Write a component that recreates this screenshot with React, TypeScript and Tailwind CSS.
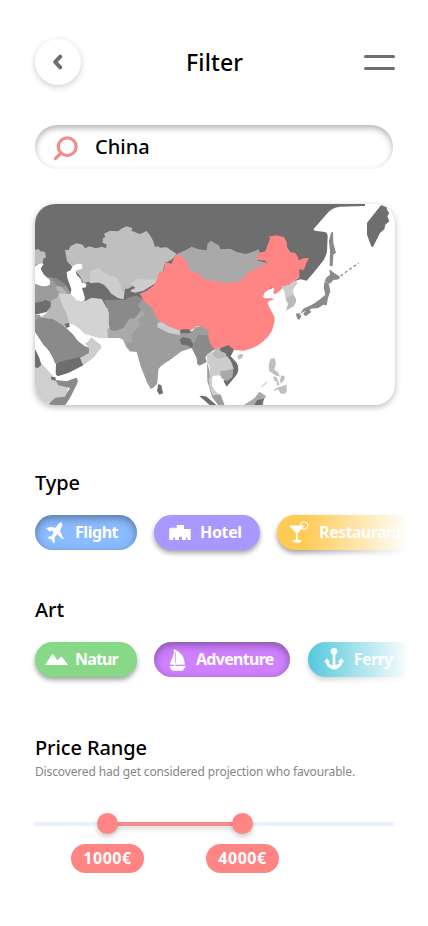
import React from "react";

const heading = "font-['Noto_Sans'] font-medium text-black whitespace-nowrap";

function WorldMap() {
  return (
    <svg viewBox="0 0 1080 603" className="block h-full w-full" fill="#6e6e6e" strokeLinejoin="round">
      <g transform="translate(-15 -18)">
        {/* Russia */}
        <path d="M15 18H1005V24L930 26Q905 28 890 48L851 93Q848 98 860 99L885 102Q893 105 893 115L891 160Q886 185 870 200L850 225L830 248L812 244L700 280L300 320L15 300Z" />
        {/* Ukraine, Black Sea */}
        <path fill="#bfbfbf" d="M15 155L25 153L32 160L45 162L48 178L40 182L38 194L15 202Z" />
        {/* Turkey, Caucasus */}
        <path fill="#9b9b9b" d="M15 250L60 238L80 242L98 254L108 262L118 278L130 292L100 304L80 310L60 330L50 314L15 322Z" />
        <path fill="#fff" d="M15 205L26 198L36 195L41 198L32 212L42 230L57 243Q63 252 59 260Q50 266 34 264L15 257Z" />
        <path fill="#8a8a8a" d="M62 240L82 243L100 255L110 263L100 268L80 262Z" />
        <path fill="#b5b5b5" d="M78 264L95 268L114 288L104 292L80 276Z" />
        {/* Iraq and Syria */}
        <path fill="#b9b9b9" d="M60 326L62 310L80 300L86 290L110 320L112 350L120 378L100 386L60 366L32 358L50 345Z" />
        <path d="M15 314L40 310L46 306L62 312L62 326L50 342L15 350Z" />
        {/* Arabia */}
        <path fill="#9b9b9b" d="M15 350L30 350L34 364L15 372Z" />
        <path fill="#8a8a8a" d="M15 368L30 358L70 364L102 384L130 410L145 430L165 445L180 450L176 468L155 490L100 506L75 496Q62 458 40 440L15 402Z" />
        <path d="M78 498L95 490L150 478L160 502L115 525L85 534Q77 534 77 522Z" />
        <path fill="#cdcdcd" d="M150 480L178 464L176 448L165 438L184 418L198 430L212 440Q218 448 206 458L192 478L160 502Z" />
        <path d="M104 378L118 374L119 386L108 390Z" />
        {/* Horn of Africa */}
        <path fill="#cfcfcf" d="M15 480L34 496L70 535L85 560L115 568L110 590L65 610L35 622H15Z" />
        <path d="M15 452L28 480L34 500L24 510L15 508Z" />
        <path fill="#8a8a8a" d="M76 546L110 550L138 539Q146 541 142 556L120 600L105 622H50L75 600L105 595L120 570L85 562Z" />
        <path d="M63 536L76 538L78 548L64 545Z" />
        {/* Kazakhstan */}
        <path fill="#bfbfbf" d="M105 155L115 157L122 144L140 136L158 140L165 151L178 145L198 151L216 146L228 151L230 140L218 134L219 120L226 117L222 107L240 98L265 100L274 92L290 85L307 90L304 98L330 108L350 99L362 115L370 130L375 148L383 144L390 149L410 148L440 168L425 185L405 195L400 215L385 245L350 255L318 258L290 275L270 300L240 285L218 255L180 252L160 255L150 235L125 205L111 190Z" />
        {/* Central Asia */}
        <path d="M160 256L180 252L215 258L245 282L280 304L290 276L325 280L360 330H220L166 308Z" />
        <path fill="#cdcdcd" d="M180 219L205 211L232 230L258 237L270 258L276 278L283 284L281 304L265 301L242 286L229 264L205 253L180 256Z" />
        <path fill="#cdcdcd" d="M300 256L325 242L350 245L382 244L376 256L340 278L315 284L294 278L316 270Z" />
        <path d="M285 272L300 272L312 268L298 283L284 282Z" />
        {/* Iran */}
        <path fill="#d3d3d3" d="M85 284L105 288L122 288L150 309L165 309L185 299L215 303L225 320L238 346L236 376L248 401L238 420L210 421L188 415L175 410L162 408L148 392L130 380L117 376L112 350L98 325L92 306Z" />
        {/* Pakistan */}
        <path fill="#a9a9a9" d="M232 392L280 380L298 350L318 322L330 308L362 318L350 352L332 362L336 374L312 405L318 435L308 460L290 450L278 424L266 420L234 420Z" />
        {/* Afghanistan */}
        <path fill="#8a8a8a" d="M222 306L250 305L285 306L300 297L320 293L340 302L330 318L334 336L315 360L298 362L280 390L255 399L240 395L236 376L237 346Z" />
        {/* India */}
        <path fill="#9d9d9d" d="M342 300L400 340L450 380L495 405L520 390L540 410L520 425L485 450L455 460L420 486Q386 506 385 516L382 556Q368 575 362 572L352 556L332 505L320 462L298 460L288 436L308 434L304 410L330 380L326 362L346 348L322 322Z" />
        <path d="M385 558L394 562L399 586L388 590L381 578Z" />
        {/* Caspian Sea */}
        <path fill="#fff" d="M110 222L122 217Q126 204 136 200Q150 195 156 200Q160 212 152 214L140 216Q135 222 140 230L152 243L156 254L169 257L168 268L156 270L165 300Q165 310 155 310L140 307L122 288L124 274L112 240Z" />
        {/* Persian Gulf */}
        <path fill="#fff" d="M118 378L130 380L148 392L165 409L178 414L184 418L174 430L158 436Q146 434 140 424L124 398Z" />
        {/* Mongolia */}
        <path fill="#a9a9a9" d="M440 168L468 156L485 146L505 154L530 157L532 138L542 128L566 142L572 154L600 152L620 162L648 168L672 160L686 154L690 168L682 188L712 194L655 230L640 248L590 262L510 255L470 220Z" />
        {/* China */}
        <path fill="#ff8585" d="M442 167L460 180L474 198L475 215L510 228L520 243L590 256L635 248L648 228L680 210L712 196L706 188L680 185L686 165L706 160L720 122L716 116L740 112L762 118L770 132L772 150L782 163L796 165L804 178L806 187L822 181L837 180L829 195L822 216L808 214L808 240L792 250L780 262L764 265L742 285L728 292L732 275L725 268L703 285L700 297L722 298L732 305Q712 316 716 324L728 346Q736 360 733 373L726 398Q715 418 700 430Q675 452 640 458L610 456L595 444L570 452L550 456L535 432L533 400L518 386L500 385L485 396L450 400L415 384L388 370L374 350L366 330L345 312L329 287L350 278L372 262L383 240L385 225L402 217L406 193L425 197L432 178Z" />
        {/* Nepal */}
        <path fill="#cdcdcd" d="M383 374L395 373L415 385L450 398V412L415 404L382 388Z" />
        {/* Yellow Sea */}
        <path fill="#fff" d="M698 296L712 282L728 270L732 271L726 286L740 288L752 282L770 290L750 310L732 313L717 322L712 316L718 308L734 305L730 301L704 301Z" />
        {/* Bhutan, Bangladesh, Myanmar */}
        <path d="M450 398L456 394L476 394L484 405L482 420L496 432L488 452L472 442L455 440L449 425L458 418Z" />
        <path fill="#9d9d9d" d="M452 406L482 405L496 388L515 384L536 398L535 414L510 414L495 446L480 422L455 416Z" />
        <path fill="#8a8a8a" d="M485 450L494 430L506 410L535 412L538 432L554 454L534 468L526 478L530 492L508 503L502 498L500 480Z" />
        {/* Indochina */}
        <path d="M555 454L572 450L595 441L612 455L602 475L620 494Q630 512 620 530L590 566L580 548L606 535L608 512L575 470Z" />
        <path fill="#cdcdcd" d="M530 470L550 460L560 470L590 473L603 490L611 512L570 535L550 533L542 548L540 570L534 540L540 510L531 490Z" />
        <path fill="#b9b9b9" d="M554 454L568 448L572 460L588 466L588 478L560 482L550 470Z" />
        <path fill="#a9a9a9" d="M570 520L595 516L610 512L607 538L590 550L574 540Z" />
        <path fill="#9d9d9d" d="M531 494L537 512L540 550L552 584L572 590L584 622H565L546 597L532 550Z" />
        <path fill="#cdcdcd" d="M536 540L546 544L552 574L566 590L548 592L538 566Z" />
        <path fill="#fff" d="M546 540Q560 526 572 536L580 550L586 574L566 584Q552 578 546 562Z" />
        <path d="M508 594Q520 592 530 596L560 622H540Z" />
        {/* Borneo and the Philippines */}
        <path fill="#a9a9a9" d="M640 622L674 600L688 581L708 594L700 608V622Z" />
        <path d="M672 622L682 606L702 602L695 622Z" />
        <g fill="#bfbfbf">
          <path d="M622 474L632 467L640 470L636 480L625 485Z" />
          <path d="M721 482L734 481L738 495L733 515L744 522L750 536L736 532L718 520L716 504Z" />
          <path d="M729 535L740 538L744 548L734 550ZM754 532L764 535L763 546L752 557L750 546ZM740 548L746 550L748 560L741 563ZM730 576L745 568L770 560L770 580L764 588L750 586L746 574L732 578ZM693 566L714 548L710 556L695 568Z" />
        </g>
      </g>
      <g transform="translate(705 -18)">
        {/* Korea */}
        <path fill="#cdcdcd" d="M35 265L55 262L75 247L83 255L68 276L72 292L46 300L44 282Z" />
        <path fill="#b9b9b9" d="M46 300L70 290Q80 300 78 312L72 324L48 338L54 318Z" />
        {/* Japan */}
        <path fill="#8a8a8a" d="M183 104L189 101L190 135L198 164L190 170L188 205L179 203L180 160L177 128ZM178 214L194 226L210 236L207 244L190 246L180 257L164 248L170 238L180 230ZM164 250L176 256L181 280L174 300L170 322L160 320L145 330L122 332L112 342L104 340L88 348L94 354L88 366L82 362L77 347L92 345L100 332L130 318L152 302L166 290L161 268ZM100 345L118 335L124 342L108 354L102 352Z" />
        {/* Kuril islands */}
        <path fill="none" stroke="#8a8a8a" strokeWidth="4" strokeDasharray="9 7" d="M212 234L240 213L266 195" />
        <path d="M333 22L352 24L350 34L358 46L352 54L358 70L346 80L343 94L330 105L310 145Q305 150 302 140L291 110L291 74Z" />
      </g>
    </svg>
  );
}

function PlaneIcon() {
  return (
    <svg viewBox="0 0 54 66" className="h-[22px] w-[18px] shrink-0" fill="#fff">
      <path d="M47 2Q50 3 49 10L42 27L53 50L49 52L34 37L25 47L27 60L23 64L17 53L5 48L6 45L17 42L23 30L13 25L13 29L8 28L6 22L1 22L1 18L14 15L29 17L38 5Q43 1 47 2Z" />
    </svg>
  );
}
function HotelIcon() {
  return (
    <svg viewBox="0 0 66 46" className="h-[15px] w-[22px] shrink-0" fill="#fff">
      <path d="M0 10H5V8H9V10H14V8H18V10H23V0H45V12H66V46H56V38H51V46H39V36H30V46H18V38H12V46H0Z" />
    </svg>
  );
}
function CocktailIcon() {
  return (
    <svg viewBox="0 0 62 68" className="mb-[2px] h-[22px] w-[20px] shrink-0" fill="#fff">
      <path d="M0 14H48L27 38V57Q39 58 39 63Q38 67 25 67Q11 67 10 63Q11 58 22 57V38Z" />
      <circle cx="47" cy="14" r="11" fill="none" stroke="#fff" strokeWidth="3.5" />
    </svg>
  );
}
function MountainIcon() {
  return (
    <svg viewBox="0 0 68 32" className="h-[11px] w-[23px] shrink-0" fill="#fff">
      <path d="M0 32L20 2Q23 -1 26 3L37 19L45 9Q48 6 51 9L68 32Z" />
    </svg>
  );
}
function BoatIcon() {
  return (
    <svg viewBox="0 0 50 66" className="h-[22px] w-[17px] shrink-0" fill="#fff">
      <path d="M14 0L18 2Q46 14 47 47H18V51H50L44 61Q42 65 38 65H12Q7 65 5 60L0 51H14V47H4L2 44L14 14ZM18 8V42H20V8Z" fillRule="evenodd" />
    </svg>
  );
}
function AnchorIcon() {
  return (
    <svg viewBox="0 0 60 66" className="mb-[2px] h-[22px] w-[20px] shrink-0" fill="#fff">
      <circle cx="30" cy="10" r="10" />
      <path d="M26 15H34V52Q45 50 47 43L41 43L52 31L60 43H55Q51 62 30 65Q9 62 5 43H0L8 31L19 43L13 43Q15 50 26 52Z" />
    </svg>
  );
}

const raised = "shadow-[0_3px_5px_rgba(0,0,0,0.36)]";
const pressed = "shadow-[inset_0_3px_8px_rgba(0,0,0,0.36)]";
const chip =
  "flex h-[35px] shrink-0 items-center rounded-full font-['Noto_Sans'] text-[16px] leading-none font-bold text-white whitespace-nowrap";

function Price({ value }: { value: string }) {
  return (
    <div className="flex w-[73px] flex-col items-center">
      <div className="h-[21px] w-[21px] rounded-full bg-[#ff8585] shadow-[0_3px_5px_rgba(0,0,0,0.2)]" />
      <div className="mt-[10px] flex h-[29px] w-[73px] items-center justify-center rounded-full bg-[#ff8585] pb-[2px] font-['Noto_Sans'] text-[16px] leading-none font-bold tracking-[0.5px] text-white">
        {value}
      </div>
    </div>
  );
}

export default function App() {
  return (
    <main className="h-[926px] w-[428px] overflow-hidden bg-white pt-[39px] pl-[35px]">
      <header className="flex h-[46px] w-[360px] items-center">
        <button className="flex h-[46px] w-[46px] items-center justify-center rounded-full bg-white shadow-[0_2px_6px_rgba(0,0,0,0.2)]">
          <svg viewBox="0 0 12 16" className="h-4 w-3" fill="none" stroke="#6e6e6e" strokeWidth="4" strokeLinecap="round" strokeLinejoin="round">
            <path d="M8.2 2.7L3.2 8L8.2 13.3" />
          </svg>
        </button>
        <h1 className={`${heading} ml-[105px] pt-px text-[23px] leading-none tracking-[0.15px]`}>Filter</h1>
        <button className="mr-[0.4px] ml-auto flex w-[30.4px] flex-col gap-[9px]">
          <span className="h-[3px] w-full rounded-full bg-[#6e6e6e]" />
          <span className="h-[3px] w-full rounded-full bg-[#6e6e6e]" />
        </button>
      </header>

      <div className="mt-[40px] flex h-[44px] w-[358px] items-center rounded-full pl-[18px] shadow-[inset_0_3px_6px_rgba(0,0,0,0.3)]">
        <svg viewBox="0 0 25 25" className="mt-[2px] h-[25px] w-[25px]" fill="none" stroke="#f58b8b" strokeWidth="3.2" strokeLinecap="round">
          <circle cx="14.2" cy="10.7" r="8.9" />
          <path d="M8 17L2.4 22.6" />
        </svg>
        <span className={`${heading} ml-[17px] text-[20px] leading-none`}>China</span>
      </div>

      <section className="mt-[35px] h-[201px] w-[360px] overflow-hidden rounded-[20px] bg-white shadow-[0_2px_6px_rgba(0,0,0,0.28)]">
        <WorldMap />
      </section>

      <h2 className={`${heading} mt-[64px] text-[20px] leading-[28px] tracking-[-0.1px]`}>Type</h2>
      <div className="mt-[18px] flex gap-[17px]">
        <div className={`${chip} ${pressed} w-[102px] bg-[#8abaff] pl-[11px]`}>
          <PlaneIcon />
          <span className="ml-[11px] pb-[2px] tracking-[-0.45px]">Flight</span>
        </div>
        <div className={`${chip} ${raised} w-[106px] bg-[#a898ff] pl-[15px]`}>
          <HotelIcon />
          <span className="ml-[9px] pb-[2px] tracking-[-0.35px]">Hotel</span>
        </div>
        <div className="-my-[10px] -ml-[10px] shrink-0 py-[10px] pl-[10px] mask-r-from-25% mask-r-to-98%">
          <div className={`${chip} ${raised} w-[136px] bg-[#ffcb55] pl-[12px]`}>
            <CocktailIcon />
            <span className="ml-[10px] pb-[2px] tracking-[-0.55px]">Restaurant</span>
          </div>
        </div>
      </div>

      <h2 className={`${heading} mt-[46px] text-[20px] leading-[28px]`}>Art</h2>
      <div className="mt-[18px] flex">
        <div className={`${chip} ${raised} w-[102px] bg-[#87d987] pl-[10px]`}>
          <MountainIcon />
          <span className="ml-[7px] pb-[2px] tracking-[-0.85px]">Natur</span>
        </div>
        <div className={`${chip} ${pressed} ml-[17px] w-[136px] bg-[#cf80ff] pl-[15px]`}>
          <BoatIcon />
          <span className="ml-[10px] pb-[2px] tracking-[-0.7px]">Adventure</span>
        </div>
        <div className="-my-[10px] ml-[8px] shrink-0 py-[10px] pl-[10px] mask-r-from-10% mask-r-to-98%">
          <div className={`${chip} w-[105px] bg-[#56c9dd] pl-[16px] shadow-[0_3px_5px_rgba(0,0,0,0.2)]`}>
            <AnchorIcon />
            <span className="ml-[10px] pb-[2px] tracking-[-0.6px]">Ferry</span>
          </div>
        </div>
      </div>

      <h2 className={`${heading} mt-[57px] text-[20px] leading-[28px] tracking-[-0.1px]`}>Price Range</h2>
      <p className="font-['Noto_Sans'] text-[12px] leading-[20px] tracking-[-0.14px] whitespace-nowrap text-[#858585]">
        Discovered had get considered projection who favourable.
      </p>
      <div className="mt-[31px] grid w-[361px] -translate-x-px">
        <div className="col-start-1 row-start-1 mt-[9px] h-1 rounded-full bg-[#eaf1fd]">
          <div className="ml-[73px] h-1 w-[135px] bg-[#f58b8b] shadow-[0_3px_5px_rgba(0,0,0,0.16)]" />
        </div>
        <div className="col-start-1 row-start-1 flex gap-[62px] pl-[37px]">
          <Price value="1000€" />
          <Price value="4000€" />
        </div>
      </div>
    </main>
  );
}
